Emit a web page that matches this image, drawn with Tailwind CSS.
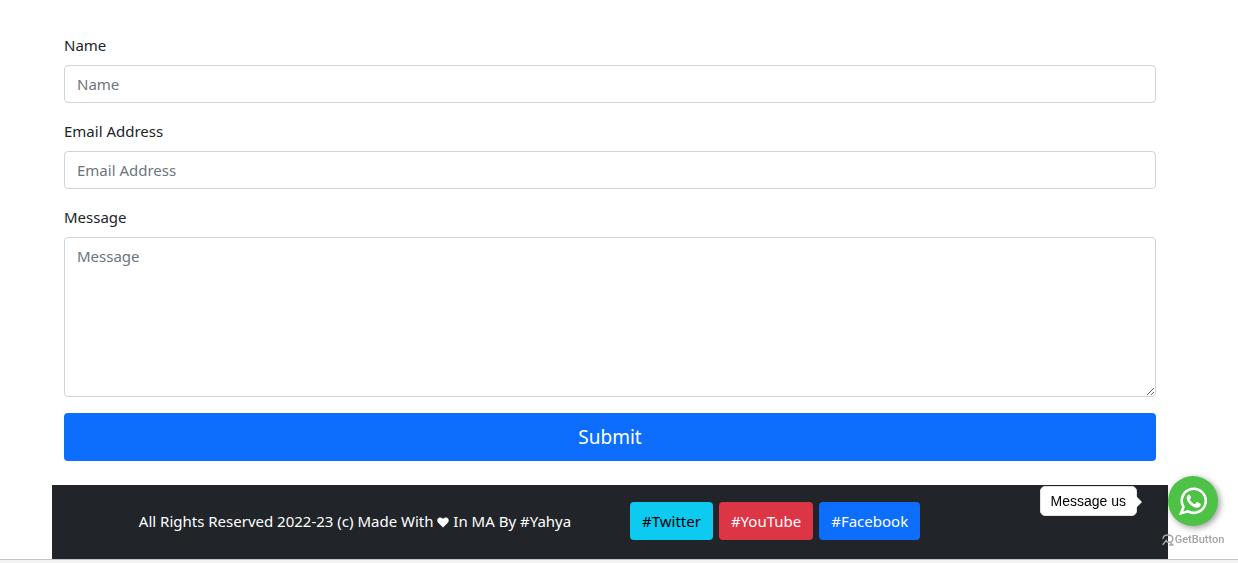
<!DOCTYPE html>
<html lang="en">
<head>
<meta charset="utf-8">
<meta name="viewport" content="width=device-width, initial-scale=1">
<title>Contact</title>
<script src="https://cdn.jsdelivr.net/npm/@tailwindcss/browser@4"></script>
</head>
<body class="flex min-h-screen flex-col bg-white font-['Noto_Sans','DejaVu_Sans',sans-serif] text-[15px] leading-6 text-[#212529]">
<main class="grow pr-[18px] pt-[33px]">
  <div class="mx-auto max-w-[1116px]">
    <form class="flex flex-col gap-4 px-3 pb-6">
      <div class="flex flex-col items-start gap-2">
        <label for="name">Name</label>
        <input id="name" type="text" placeholder="Name" class="h-[38px] w-full rounded border border-[#ced4da] px-3 placeholder:text-[#6c757d]">
      </div>
      <div class="flex flex-col items-start gap-2">
        <label for="email">Email Address</label>
        <input id="email" type="email" placeholder="Email Address" class="h-[38px] w-full rounded border border-[#ced4da] px-3 placeholder:text-[#6c757d]">
      </div>
      <div class="flex flex-col items-start gap-2">
        <label for="message">Message</label>
        <textarea id="message" placeholder="Message" class="block h-40 w-full resize-y rounded border border-[#ced4da] px-3 py-1.5 placeholder:text-[#6c757d]"></textarea>
      </div>
      <button type="submit" class="h-12 w-full rounded bg-[#0d6efd] text-[19px] text-white">Submit</button>
    </form>
    <footer class="grid grid-cols-[578px_1fr] items-center bg-[#212529] pt-[17px] pb-[19px] pr-3 text-white max-md:grid-cols-1">
      <p class="pl-7 text-center">All Rights Reserved 2022-23 (c) Made With <svg class="inline-block h-[11px] w-3" viewBox="0 0 12 11" fill="#fff" role="img" aria-label="love"><path d="M6 10.500L1.200 5.800C-.2 4.400 0 2 1.600 1 3 .1 4.900.500 6 2 7.100.500 9 .1 10.400 1c1.600 1 1.800 3.400.4 4.800z"/></svg> In MA By #Yahya</p>
      <div class="flex flex-wrap gap-1.5">
        <a href="#twitter" class="rounded bg-[#0dcaf0] px-3 py-[7px] text-black">#Twitter</a>
        <a href="#youtube" class="rounded bg-[#dc3545] px-3 py-[7px]">#YouTube</a>
        <a href="#facebook" class="rounded bg-[#0d6efd] px-3 py-[7px]">#Facebook</a>
      </div>
    </footer>
  </div>
</main>
<div class="h-1 border-t border-[#c4c4c6] bg-[#f3f3f3]"></div>

<aside class="fixed right-[13px] bottom-[15px] flex w-16 flex-col items-center gap-1.5">
  <div class="absolute top-[10px] right-[88px] flex h-[30px] items-center rounded-[5px] border border-[#e2e2e2] bg-white px-2.5 font-['Liberation_Sans',Arial,sans-serif] text-sm whitespace-nowrap text-black">
    Message us
    <svg class="absolute top-[9px] -right-[6px] h-3 w-1.5" viewBox="0 0 6 12" aria-hidden="true"><path d="M0 0l6 6-6 6z" fill="#fff"/></svg>
  </div>
  <button type="button" aria-label="WhatsApp" class="flex size-[50px] items-center justify-center rounded-full bg-[#4dc247] shadow-[2px_2px_6px_rgba(0,0,0,0.4)]">
    <svg class="size-7" viewBox="0 0 28 28" fill="none" aria-hidden="true"><path d="M4.500 20A12 12 0 1 1 9 24.300L2 26.200z" stroke="#fff" stroke-width="2.600"/><path d="M10 7.500c-.8 0-2.500 1.300-2.300 3.500.3 4.500 5.500 9.500 10.300 9.700 2 .1 3.800-1.500 3.800-3.300 0-.7-3.200-2.300-3.800-2.300-.8 0-1.400 2.200-2.200 2.100-1.300-.2-4.700-3-5-4.600-.1-.7 1.400-1.300 1.300-2-.1-.8-1.200-3.100-2.100-3.100z" fill="#fff"/></svg>
  </button>
  <a href="#getbutton" class="flex h-4 items-center gap-px font-[Roboto,'Liberation_Sans',sans-serif] text-[11px] leading-4 font-medium text-[#a4a4a4]">
    <svg class="h-3 w-3 shrink-0" viewBox="0 0 12 12" fill="none" stroke="#a4a4a4" stroke-width="1.400" stroke-linecap="round" stroke-linejoin="round" aria-hidden="true"><path d="M1 4.500C1.300 2.200 3.200 1 5.800 1s5 1.400 5 4-2 3.300-3.900 3.300S4.300 7.500 4.300 6.200M4.300 6.200L1 10.500M8 8.300l3 2.700H7.500"/></svg>
    GetButton
  </a>
</aside>
</body>
</html>
